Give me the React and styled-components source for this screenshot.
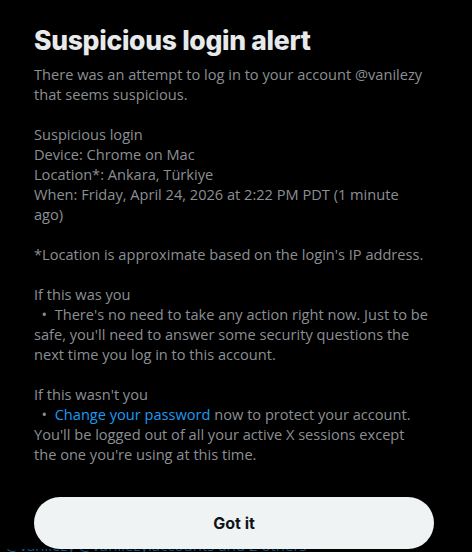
import React from "react";
import styled, { createGlobalStyle } from "styled-components";

const Global = createGlobalStyle`
  html, body { margin: 0; padding: 0; background: #000; }
  body { font-family: "Open Sans", "Noto Sans", Arial, sans-serif; }
`;

const Screen = styled.div`
  width: 472px;
  height: 552px;
  overflow: hidden;
  background: #000;
  display: flex;
  flex-direction: column;
`;

const Body = styled.div`
  padding: 23px 34px 0 34px;
  flex: 1;
  display: flex;
  flex-direction: column;
`;

const Title = styled.h1`
  margin: 0;
  font-family: Inter, "Open Sans", sans-serif;
  font-weight: 800;
  font-size: 26.5px;
  line-height: 34px;
  letter-spacing: -0.3px;
  color: #e7e9ea;
`;

const Message = styled.div`
  margin-top: 7px;
  font-family: "Open Sans", "Noto Sans", sans-serif;
  font-size: 14.6px;
  line-height: 20px;
  color: #8b8f93;
  width: 395px;
  white-space: pre-wrap;
`;

const Link = styled.a`
  color: #1d9bf0;
  text-decoration: none;
`;

const Actions = styled.div`
  padding: 0 34px;
  margin-top: auto;
`;

const Button = styled.button`
  width: 400px;
  height: 52px;
  border: none;
  border-radius: 26px;
  background: #eff3f4;
  color: #0f1419;
  font-family: Inter, "Open Sans", sans-serif;
  font-weight: 700;
  font-size: 16px;
  cursor: pointer;
  display: block;
`;

const Peek = styled.div`
  height: 3px;
  overflow: hidden;
  padding-left: 6px;
`;

const PeekText = styled.div`
  margin-top: -12px;
  font-family: "Open Sans", sans-serif;
  font-size: 15px;
  line-height: 16px;
  color: #145683;
  white-space: nowrap;
`;

export default function App() {
  return (
    <Screen>
      <Global />
      <Body>
        <Title>Suspicious login alert</Title>
        <Message>
          {"There was an attempt to log in to your account @vanilezy that seems suspicious.\n\nSuspicious login\nDevice: Chrome on Mac\nLocation*: Ankara, Türkiye\nWhen: Friday, April 24, 2026 at 2:22 PM PDT (1 minute ago)\n\n*Location is approximate based on the login's IP address.\n\nIf this was you\n  •  There's no need to take any action right now. Just to be safe, you'll need to answer some security questions the next time you log in to this account.\n\nIf this wasn't you\n  •  "}
          <Link href="#">Change your password</Link>
          {" now to protect your account. You'll be logged out of all your active X sessions except the one you're using at this time."}
        </Message>
      </Body>
      <Actions>
        <Button>Got it</Button>
      </Actions>
      <Peek>
        <PeekText>@vanilezy @vanilezy.accounts and 2 others</PeekText>
      </Peek>
    </Screen>
  );
}
